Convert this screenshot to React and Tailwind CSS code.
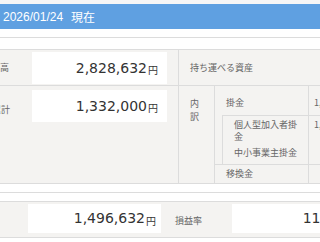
const jp = { fontFamily: '"Noto Sans CJK JP", "Noto Sans", sans-serif' };
const num = { fontFamily: '"DejaVu Sans", "Noto Sans CJK JP", sans-serif' };

function ValueBox({ value, className }) {
  return (
    <div
      className={`bg-white flex items-center justify-end text-[14px] text-[#333] ${className}`}
      style={num}
    >
      <span>{value}</span>
      <span className="text-[10px] ml-[1px] mt-[3px]" style={jp}>円</span>
    </div>
  );
}

export default function App() {
  return (
    <div className="w-[320px] h-[242px] overflow-hidden bg-white">
      <div className="w-[420px]">
        <div className="h-[4px] bg-[#f6f6f6]" />
        <div
          className="h-[25px] bg-[#5fa0e1] text-white text-[12px] flex items-center pl-[3px]"
          style={{ fontFamily: '"Liberation Sans", "Noto Sans CJK JP", sans-serif' }}
        >
          <span>2026/01/24</span>
          <span className="ml-[8px]" style={jp}>現在</span>
        </div>
        <div className="h-[9px] border-b border-[#dcdcdc]" />
        <div className="h-[12px] border-b border-[#dcdcdc]" />

        {/* main table */}
        <div className="flex bg-[#f4f3f1] border-b border-[#dcdcdc] text-[9px] text-[#666]" style={jp}>
          {/* left */}
          <div className="w-[178px] flex flex-col">
            <div className="h-[36px] flex border-b border-[#dcdcdc]">
              <div className="w-[32px] flex justify-end items-center pr-[23px] whitespace-nowrap">評価高</div>
              <div className="pt-[2px]">
                <ValueBox value="2,828,632" className="w-[135px] h-[32px] pr-[9px]" />
              </div>
            </div>
            <div className="h-[97px] flex">
              <div className="w-[32px] flex justify-end pr-[22px] pt-[17px] whitespace-nowrap">累計</div>
              <div className="pt-[4px]">
                <ValueBox value="1,332,000" className="w-[135px] h-[32px] pr-[9px]" />
              </div>
            </div>
          </div>

          {/* right breakdown */}
          <div className="flex-1 border-l border-[#dcdcdc] flex flex-col">
            <div className="h-[36px] border-b border-[#dcdcdc] flex items-center pl-[11px]">
              持ち運べる資産
            </div>
            <div className="flex">
              <div className="w-[36px] border-r border-[#dcdcdc] px-[11px] pt-[11px] leading-[13px]">内訳</div>
              <div className="flex-1 flex flex-col">
                <div className="h-[29px] flex">
                  <div className="w-[94px] border-r border-[#dcdcdc] pl-[11px] pt-[10px]">掛金</div>
                  <div className="pl-[5px] pt-[10px] whitespace-nowrap">1,332,000円</div>
                </div>
                <div className="flex">
                  <div className="w-[7px]" />
                  <div className="flex-1 border-l border-t border-[#dcdcdc] flex flex-col leading-[12px]">
                    <div className="flex h-[29px]">
                      <div className="w-[86px] border-r border-[#dcdcdc] pl-[11px] pr-[5px] pt-[3px] break-all">個人型加入者掛金</div>
                      <div className="pl-[5px] pt-[3px] whitespace-nowrap">1,332,000円</div>
                    </div>
                    <div className="flex h-[19px]">
                      <div className="w-[86px] border-r border-[#dcdcdc] pl-[11px] pt-[2px] whitespace-nowrap">中小事業主掛金</div>
                      <div className="pl-[5px] pt-[2px]" />
                    </div>
                  </div>
                </div>
                <div className="h-[19px] flex border-t border-[#dcdcdc] leading-[12px]">
                  <div className="w-[94px] border-r border-[#dcdcdc] pl-[11px] pt-[3px]">移換金</div>
                  <div className="pl-[5px]" />
                </div>
              </div>
            </div>
          </div>
        </div>

        <div className="h-[9px] border-b border-[#dcdcdc]" />
        <div className="h-[9px] border-b border-[#dcdcdc]" />

        {/* bottom row */}
        <div className="flex bg-[#f4f3f1] border-b border-[#dcdcdc] h-[36px] pt-[2px] text-[9px] text-[#666]" style={jp}>
          <div className="w-[28px]" />
          <ValueBox value="1,496,632" className="w-[133px] h-[29px] pr-[5px]" />
          <div className="w-[71px] flex items-center pl-[14px]">損益率</div>
          <div
            className="w-[138px] h-[29px] bg-white flex items-center justify-end pr-[5px] text-[14px] text-[#333]"
            style={num}
          >
            112.36%
          </div>
        </div>
      </div>
    </div>
  );
}
